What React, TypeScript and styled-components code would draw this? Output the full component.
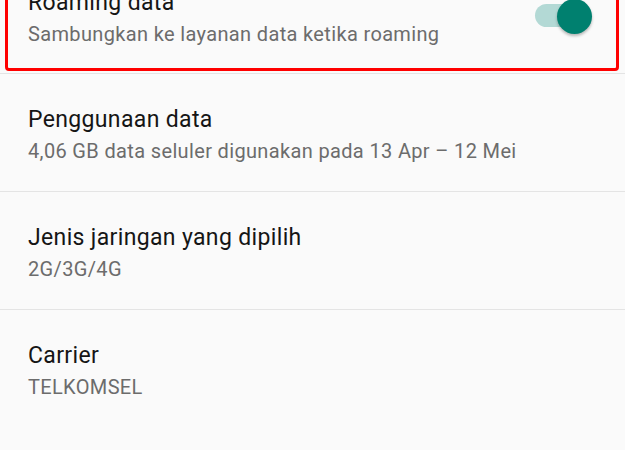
import React from 'react';
import styled, { createGlobalStyle } from 'styled-components';

type Setting = {
  title: string;
  summary: string;
  highlighted?: boolean;
  toggle?: boolean;
};

const settings: Setting[] = [
  {
    title: 'Roaming data',
    summary: 'Sambungkan ke layanan data ketika roaming',
    highlighted: true,
    toggle: true,
  },
  { title: 'Penggunaan data', summary: '4,06 GB data seluler digunakan pada 13 Apr – 12 Mei' },
  { title: 'Jenis jaringan yang dipilih', summary: '2G/3G/4G' },
  { title: 'Carrier', summary: 'TELKOMSEL' },
];

const GlobalStyle = createGlobalStyle`
  html, body {
    margin: 0;
    padding: 0;
    background: #fafafa;
    overflow: hidden;
  }
  body {
    font-family: Roboto, 'Noto Sans', sans-serif;
  }
`;

const Switch = ({ checked }: { checked: boolean }) => (
  <SwitchBox>
    <Track checked={checked} />
    <Thumb checked={checked} />
  </SwitchBox>
);

const App = () => (
  <>
    <GlobalStyle />
    <Page>
      {settings.map((item) => (
        <Row key={item.title} highlighted={item.highlighted}>
          <TextBlock>
            <Title>{item.title}</Title>
            <Summary>{item.summary}</Summary>
          </TextBlock>
          {item.toggle && <Switch checked />}
        </Row>
      ))}
    </Page>
  </>
);

const Page = styled.div`
  display: flex;
  flex-direction: column;
  margin-top: -34px;
  min-height: 500px;
  background: #fafafa;
`;

const Row = styled.div<{ highlighted?: boolean }>`
  display: flex;
  align-items: flex-start;
  justify-content: space-between;
  ${(props) =>
    props.highlighted
      ? `
    margin: 0 6px 2px 5px;
    padding: 20px 24px 20px 20px;
    border: 3px solid #ff0000;
    border-radius: 4px;
  `
      : `
    padding: 32px 24px 26px 28px;
    border-top: 1px solid #e4e4e4;
  `}
`;

const TextBlock = styled.div`
  display: flex;
  flex-direction: column;
`;

const Title = styled.div`
  font-size: 23px;
  letter-spacing: 0.35px;
  line-height: 28px;
  color: #151515;
`;

const Summary = styled.div`
  margin-top: 3px;
  font-size: 20px;
  letter-spacing: 0.35px;
  line-height: 28px;
  color: #6c6c6c;
`;

const SwitchBox = styled.div`
  position: relative;
  flex-shrink: 0;
  width: 57px;
  height: 35px;
  margin-top: 10px;
`;

const Track = styled.div<{ checked: boolean }>`
  position: absolute;
  left: 0;
  top: 5px;
  width: 56px;
  height: 23px;
  border-radius: 12px;
  background: ${(props) => (props.checked ? '#b3d9d5' : '#bdbdbd')};
`;

const Thumb = styled.div<{ checked: boolean }>`
  position: absolute;
  top: 0;
  ${(props) => (props.checked ? 'right: 0;' : 'left: 0;')}
  width: 35px;
  height: 35px;
  border-radius: 50%;
  background: ${(props) => (props.checked ? '#00806f' : '#f1f1f1')};
  box-shadow: 0 2px 3px rgba(0, 0, 0, 0.28);
`;

export default App;
